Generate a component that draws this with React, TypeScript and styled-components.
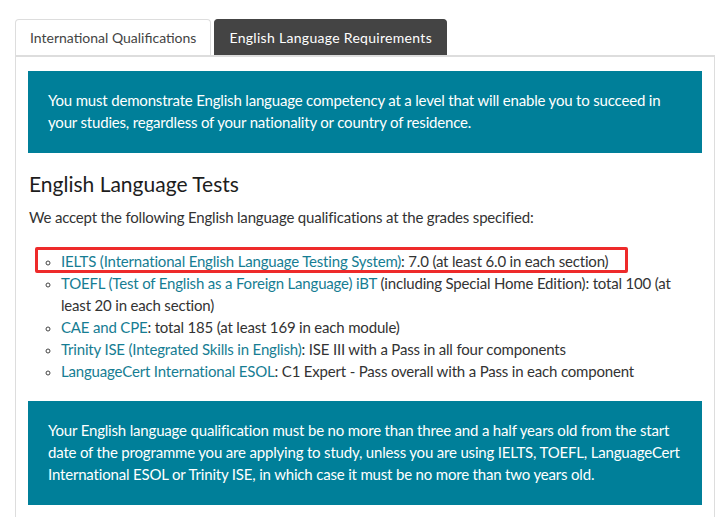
import React from "react";
import styled, { createGlobalStyle } from "styled-components";

const GlobalStyle = createGlobalStyle`
  html, body {
    margin: 0;
    padding: 0;
    background: #fff;
  }
  body {
    font-family: Lato, "Liberation Sans", Arial, sans-serif;
    color: #333;
    letter-spacing: -0.18px;
  }
`;

const Page = styled.div`
  padding: 19px 10px 0 15px;
`;

const TabList = styled.div`
  display: flex;
  gap: 3px;
  align-items: flex-end;
`;

const Tab = styled.div<{ $active?: boolean }>`
  height: 36px;
  box-sizing: border-box;
  display: flex;
  align-items: center;
  padding: 0 14px;
  font-size: 14px;
  letter-spacing: ${({ $active }) => ($active ? "0.3px" : "0")};
  border-radius: 4px 4px 0 0;
  border: 1px solid ${({ $active }) => ($active ? "#444" : "#ddd")};
  border-bottom: none;
  background: ${({ $active }) => ($active ? "#444" : "#fff")};
  color: ${({ $active }) => ($active ? "#fff" : "#444")};
`;

const Panel = styled.div`
  border: 1px solid #ddd;
  border-top: 2px solid #ddd;
  border-bottom: none;
  padding: 14px 12px 0 12px;
  height: 460px;
`;

const Callout = styled.div<{ $top?: number }>`
  background: #007f99;
  color: #fff;
  font-size: 15px;
  line-height: 22px;
  padding: 18px 20px 20px 20px;
  margin-top: ${({ $top }) => $top ?? 0}px;
`;

const Heading = styled.h2`
  margin: 16px 0 0 1px;
  font-size: 21px;
  font-weight: 400;
  letter-spacing: 0;
  color: #1d1d1d;
  line-height: 30px;
`;

const Intro = styled.p`
  margin: 7px 0 0 1px;
  font-size: 15px;
  line-height: 22px;
`;

const List = styled.ul`
  margin: 22px 0 0 0;
  padding-left: 33px;
  list-style: circle;
  font-size: 15px;
  line-height: 22px;
`;

const Item = styled.li<{ $marked?: boolean }>`
  position: relative;
  &::marker {
    font-size: 12px;
    color: #444;
  }
  ${({ $marked }) =>
    $marked &&
    `
    &::after {
      content: "";
      position: absolute;
      left: -26px;
      top: -3px;
      width: 593px;
      height: 26px;
      box-sizing: border-box;
      border: 3px solid #ee2a2a;
      border-radius: 2px;
    }
  `}
`;

const Link = styled.a`
  color: #167d93;
  text-decoration: none;
`;

export default function App() {
  return (
    <Page>
      <GlobalStyle />
      <TabList>
        <Tab>International Qualifications</Tab>
        <Tab $active>English Language Requirements</Tab>
      </TabList>
      <Panel>
        <Callout>
          You must demonstrate English language competency at a level that will enable you to succeed in
          your studies, regardless of your nationality or country of residence.
        </Callout>
        <Heading>English Language Tests</Heading>
        <Intro>We accept the following English language qualifications at the grades specified:</Intro>
        <List>
          <Item $marked>
            <Link href="#">IELTS (International English Language Testing System)</Link>: 7.0 (at least 6.0 in each section)
          </Item>
          <Item>
            <Link href="#">TOEFL (Test of English as a Foreign Language) iBT</Link> (including Special Home Edition): total 100 (at
            least 20 in each section)
          </Item>
          <Item>
            <Link href="#">CAE and CPE</Link>: total 185 (at least 169 in each module)
          </Item>
          <Item>
            <Link href="#">Trinity ISE (Integrated Skills in English)</Link>: ISE III with a Pass in all four components
          </Item>
          <Item>
            <Link href="#">LanguageCert International ESOL</Link>: C1 Expert - Pass overall with a Pass in each component
          </Item>
        </List>
        <Callout $top={19}>
          Your English language qualification must be no more than three and a half years old from the start
          date of the programme you are applying to study, unless you are using IELTS, TOEFL, LanguageCert
          International ESOL or Trinity ISE, in which case it must be no more than two years old.
        </Callout>
      </Panel>
    </Page>
  );
}
